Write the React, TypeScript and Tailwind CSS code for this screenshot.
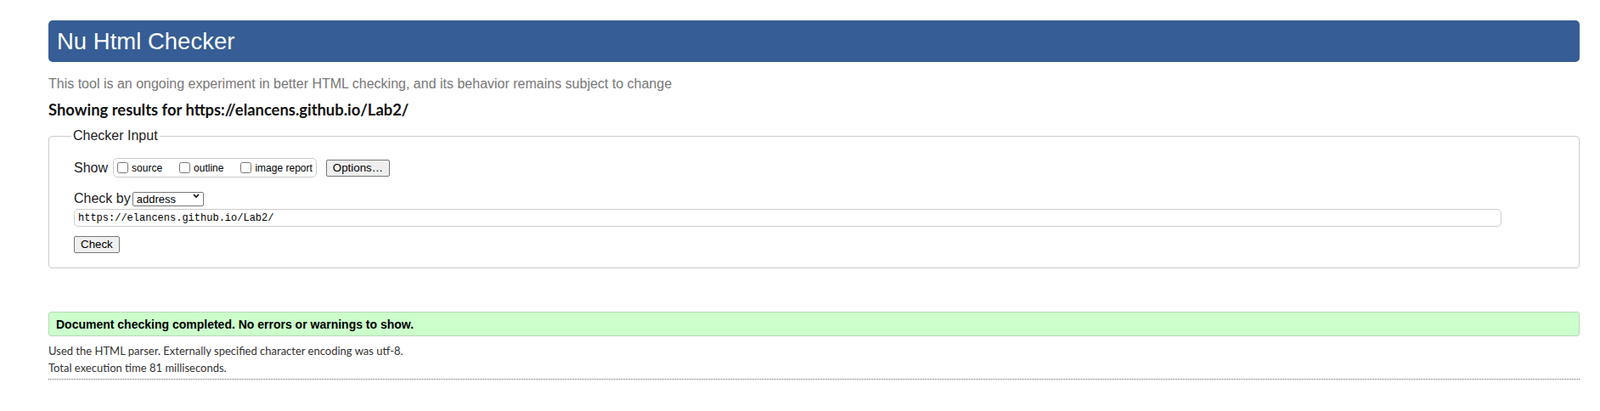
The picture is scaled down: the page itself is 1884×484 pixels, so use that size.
import { useState } from 'react';

const options = [
  { id: 'source', label: 'source' },
  { id: 'outline', label: 'outline' },
  { id: 'image-report', label: 'image report' },
];

function ShowOptions() {
  return (
    <span className="ml-[6px] flex h-[23px] items-center rounded-[5px] border border-[#cccccc] pl-[4px] pr-[4px]">
      {options.map((opt, i) => (
        <label
          key={opt.id}
          className={`flex items-center ${i > 0 ? 'ml-[20px]' : ''}`}
        >
          <input type="checkbox" className="m-0 h-[13px] w-[13px]" />
          <span className="ml-[4px] text-[12px] leading-[14px]">{opt.label}</span>
        </label>
      ))}
    </span>
  );
}

export default function App() {
  const [url, setUrl] = useState('https://elancens.github.io/Lab2/');

  return (
    <div className="min-h-[484px] bg-white pl-[57px] pr-[24px] pt-[24px] font-['Liberation_Sans',Arial,sans-serif] text-black">
      <header className="flex h-[49px] items-center rounded-[5px] bg-[#365d95] pl-[10px]">
        <h1 className="text-[27.5px] leading-none text-white">Nu Html Checker</h1>
      </header>

      <p className="mt-[17px] text-[16px] leading-[18px] text-[#777777]">
        This tool is an ongoing experiment in better HTML checking, and its behavior remains
        subject to change
      </p>

      <p className="mt-[10px] font-['Lato',sans-serif] text-[18.4px] font-bold leading-[22px] text-[#111111]">
        Showing results for https://elancens.github.io/Lab2/
      </p>

      <form onSubmit={(e) => e.preventDefault()}>
        <fieldset className="mt-[11px] rounded-[4px] border border-[#cccccc] pb-[17px] pl-[29px]">
          <legend className="-ml-[3px] px-[2px] text-[16px] leading-[18px] text-[#222222]">
            Checker Input
          </legend>

          <div className="mt-[17px] flex h-[23px] items-center">
            <span className="text-[16px] leading-[18px] text-[#222222]">Show</span>
            <ShowOptions />
            <button
              type="button"
              className="ml-[11px] h-[20px] rounded-[2px] border border-[#767676] bg-[#efefef] px-[7px] text-[13.33px] leading-[16px]"
            >
              Options…
            </button>
          </div>

          <div className="mt-[16px] flex h-[18px] items-center">
            <span className="text-[16px] leading-[18px] text-[#222222]">Check by</span>
            <span className="relative ml-[2px]">
              <select
                defaultValue="address"
                className="h-[17px] w-[84px] appearance-none rounded-[2px] border border-[#767676] bg-white pl-[4px] text-[13px] leading-[15px]"
              >
                <option value="address">address</option>
                <option value="file">file upload</option>
                <option value="text">text input</option>
              </select>
              <svg
                viewBox="0 0 8 5"
                className="pointer-events-none absolute right-[5px] top-[6px] h-[5px] w-[8px]"
              >
                <path d="M1 1 L4 4 L7 1" fill="none" stroke="#000" strokeWidth="1.6" />
              </svg>
            </span>
          </div>

          <input
            type="url"
            value={url}
            onChange={(e) => setUrl(e.target.value)}
            className="mt-[3px] block h-[21px] w-[1681px] rounded-[5px] border border-[#cccccc] pl-[4px] font-['Liberation_Mono',monospace] text-[12px] leading-[14px]"
          />

          <button
            type="submit"
            className="mt-[11px] block h-[20px] rounded-[2px] border border-[#767676] bg-[#efefef] px-[7px] text-[13.33px] leading-[16px]"
          >
            Check
          </button>
        </fieldset>
      </form>

      <div className="mt-[51px] flex h-[29px] items-center rounded-[3px] border border-[#b8d8b8] bg-[#ccffcc] pl-[8px]">
        <p className="text-[14px] font-bold leading-[16px]">
          Document checking completed. No errors or warnings to show.
        </p>
      </div>

      <div className="mt-[7px] border-b border-dotted border-[#666666] pb-[3px] font-['Lato',sans-serif] text-[13px] leading-[20px] text-[#333333]">
        <p>Used the HTML parser. Externally specified character encoding was utf-8.</p>
        <p>Total execution time 81 milliseconds.</p>
      </div>
    </div>
  );
}
